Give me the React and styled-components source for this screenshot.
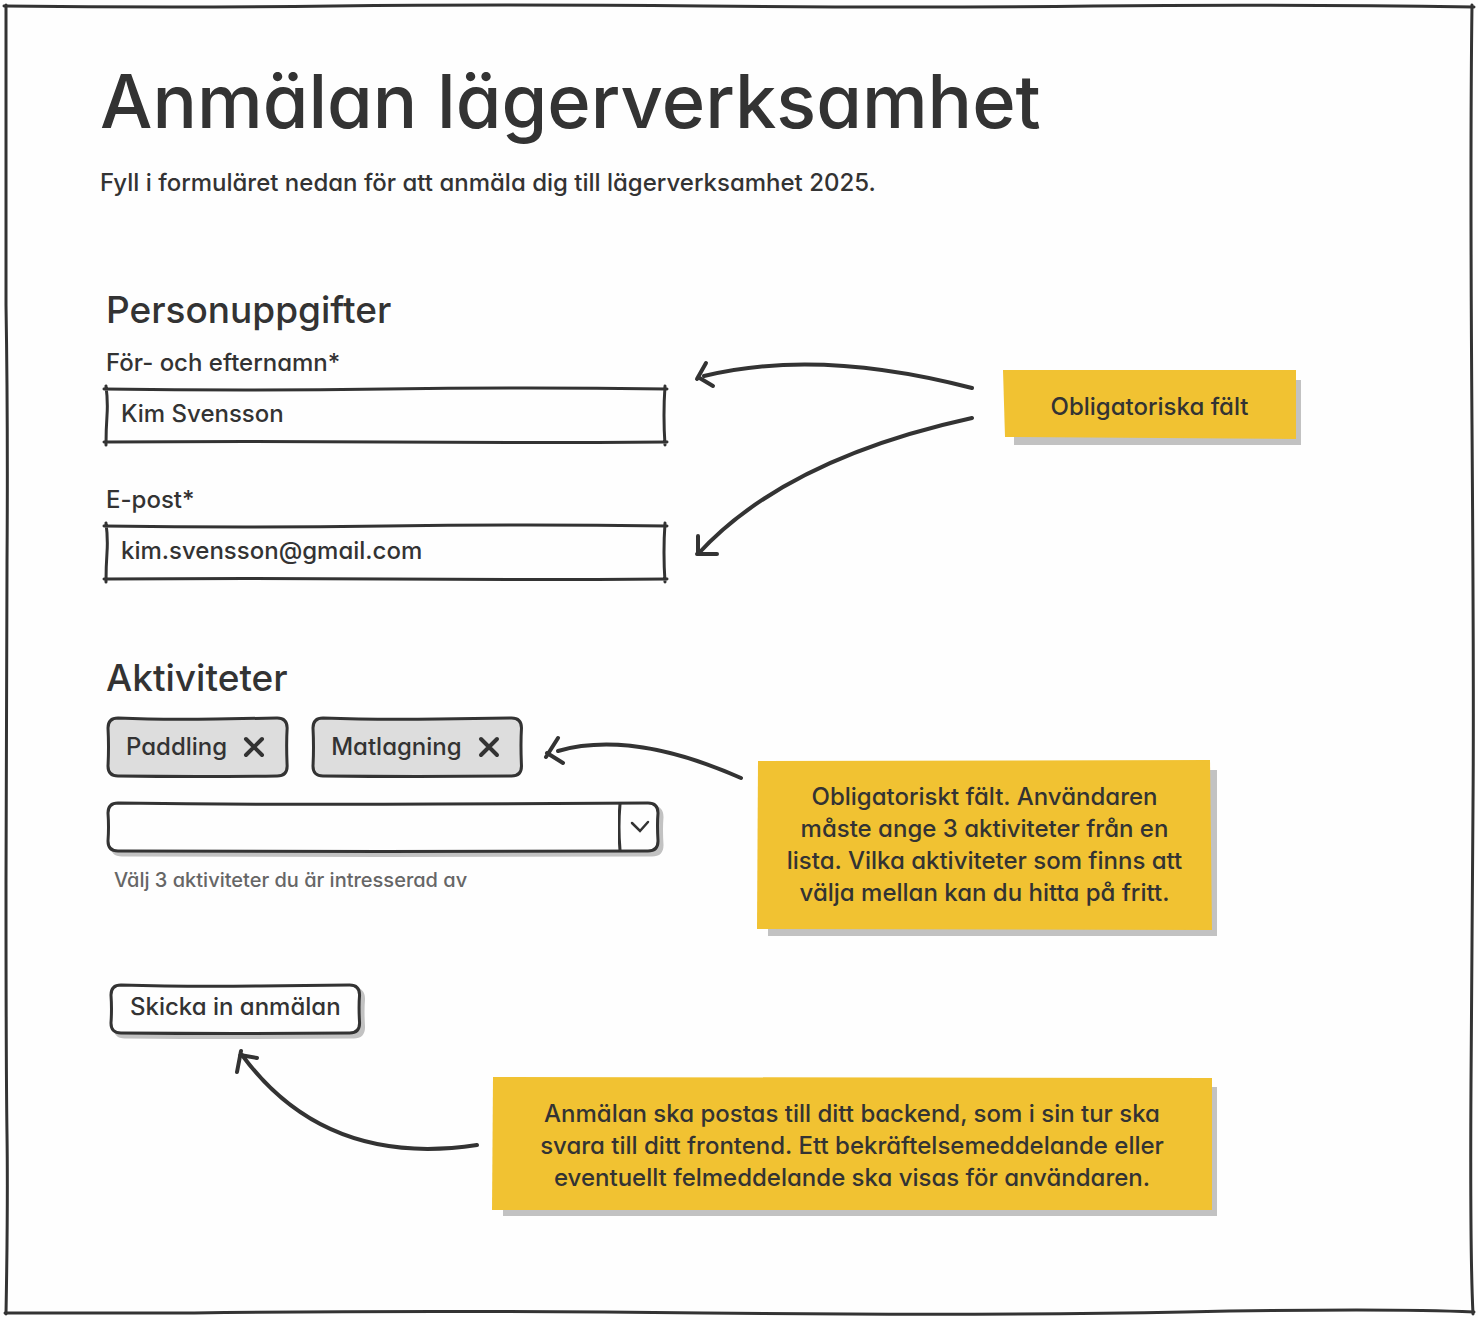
import React, { useState } from "react";
import styled, { createGlobalStyle } from "styled-components";

const ink = "#333333";
const shade = "#c2c2c2";
const yellow = "#f1c232";

const GlobalStyle = createGlobalStyle`
  *, *::before, *::after { box-sizing: border-box; }
  body {
    margin: 0;
    background: #fefefe;
    color: ${ink};
    font-family: Inter, "Open Sans", sans-serif;
    font-feature-settings: "cv11" 1;
    font-size: 24px;
    font-weight: 500;
    line-height: 32px;
  }
  input, select, button { font: inherit; font-feature-settings: inherit; color: inherit; }
  h1, h2, p { margin: 0; }
`;

/* Four hand-drawn strokes that cross slightly at the corners */
function crossedPath(w, h) {
  return [
    `M-2 2 Q${w * 0.25} 4 ${w * 0.5} 2 T${w + 1} 2`,
    `M0 -1 Q2 ${h * 0.25} 1 ${h * 0.5} T0 ${h + 1}`,
    `M-2 ${h - 2} Q${w * 0.25} ${h - 3} ${w * 0.5} ${h - 2} T${w + 1} ${h - 2}`,
    `M${w - 1} -1 Q${w - 3} ${h * 0.5} ${w - 1} ${h + 1}`,
  ].join(" ");
}

/* One closed wobbly stroke with rounded corners */
function roundedPath(w, h, r = 10) {
  const a = 2;
  const b = w - 2;
  const c = h - 2;
  return [
    `M${a + r} ${a}`,
    `Q${w * 0.3} ${a + 2} ${w * 0.6} ${a + 1}`,
    `T${b - r} ${a}`,
    `Q${b} ${a} ${b} ${a + r}`,
    `Q${b - 1} ${h * 0.45} ${b} ${c - r}`,
    `Q${b} ${c} ${b - r} ${c}`,
    `Q${w * 0.5} ${c + 1} ${a + r} ${c}`,
    `Q${a} ${c} ${a} ${c - r}`,
    `Q${a + 1} ${h * 0.5} ${a} ${a + r}`,
    `Q${a} ${a} ${a + r} ${a}Z`,
  ].join(" ");
}

const OutlineSvg = styled.svg`
  position: absolute;
  inset: 0;
  width: 100%;
  height: 100%;
  overflow: visible;
  pointer-events: none;
  z-index: -1;
  fill: ${(p) => p.$fill || "none"};
  stroke: ${ink};
  stroke-width: 3;
  stroke-linecap: round;
  stroke-linejoin: round;
`;

const ShadowPath = styled.path`
  fill: ${shade};
  stroke: ${shade};
`;

function Outline({ w, h, rounded, shadow, fill }) {
  const d = rounded ? roundedPath(w, h) : crossedPath(w, h);
  return (
    <OutlineSvg viewBox={`0 0 ${w} ${h}`} preserveAspectRatio="none" $fill={fill} aria-hidden="true">
      {shadow && <ShadowPath d={d} transform="translate(4 4)" />}
      <path d={d} vectorEffect="non-scaling-stroke" />
    </OutlineSvg>
  );
}

const Page = styled.div`
  padding: 5px 4px;
`;

const Frame = styled.main`
  position: relative;
  isolation: isolate;
  padding: 50px 96px 104px;
`;

const FrameLines = styled(OutlineSvg)``;

const Title = styled.h1`
  font-size: 74px;
  line-height: 92px;
  font-weight: 500;
`;

const Intro = styled.p`
  margin-top: 20px;
`;

const Form = styled.form`
  padding-left: 6px;
`;

const Section = styled.section`
  display: flex;
  align-items: flex-start;
  margin-top: ${(p) => p.$gap}px;
`;

const Column = styled.div`
  flex: 0 1 560px;
  min-width: 0;
`;

const Heading = styled.h2`
  font-size: 37px;
  line-height: 44px;
  font-weight: 500;
`;

const Field = styled.div`
  display: flex;
  flex-direction: column;
  gap: 8px;
  margin-top: ${(p) => p.$gap}px;
`;

const Box = styled.div`
  position: relative;
  isolation: isolate;
  height: ${(p) => p.$height}px;
`;

const TextInput = styled.input`
  display: block;
  width: 100%;
  height: 100%;
  padding: 0 15px 4px;
  border: 0;
  background: transparent;
`;

const Chips = styled.div`
  display: flex;
  align-items: center;
  gap: 22px;
  width: max-content;
  margin-top: 16px;
`;

const Chip = styled.div`
  position: relative;
  isolation: isolate;
  display: flex;
  align-items: center;
  gap: 16px;
  height: 62px;
  padding: 0 24px 0 20px;
`;

const RemoveButton = styled.button`
  display: flex;
  padding: 0;
  border: 0;
  background: transparent;
  cursor: pointer;
`;

const SelectBox = styled(Box)`
  margin-top: 23px;
  margin-right: 6px;
`;

const Select = styled.select`
  display: block;
  width: 100%;
  height: 100%;
  padding: 0 56px 0 15px;
  border: 0;
  appearance: none;
  background: transparent;
`;

const SelectMark = styled.svg`
  position: absolute;
  top: 0;
  right: 0;
  pointer-events: none;
`;

const Hint = styled.p`
  margin-top: 13px;
  padding-left: 8px;
  font-size: 20px;
  line-height: 28px;
  color: #666666;
`;

const Submit = styled.button`
  position: relative;
  isolation: isolate;
  height: 52px;
  margin: 53px 0 0 3px;
  padding: 0 21px 4px;
  border: 0;
  background: transparent;
  cursor: pointer;
`;

const Arrow = styled.svg`
  flex: none;
  overflow: visible;
  fill: none;
  stroke: ${ink};
  stroke-width: 4;
  stroke-linecap: round;
  stroke-linejoin: round;
`;

const FieldArrows = styled(Arrow)`
  margin: 69px 25px 0 26px;
`;

const ChipArrow = styled(Arrow)`
  margin-top: 20px;
`;

const SubmitRow = styled.div`
  display: flex;
  align-items: flex-start;
  gap: 14px;
  margin: 14px 0 0 128px;
`;

const Note = styled.aside`
  position: relative;
  isolation: isolate;
  flex: 0 1 ${(p) => p.$width}px;
  margin-top: ${(p) => p.$top}px;
  margin-left: ${(p) => p.$left || 0}px;
  padding: 21px 10px ${(p) => p.$bottom || 16}px;
  line-height: 32px;
  text-align: center;

  &::before,
  &::after {
    content: "";
    position: absolute;
    z-index: -1;
  }
  &::before {
    inset: 10px -5px -6px 11px;
    background: ${shade};
  }
  &::after {
    inset: 0;
    background: ${yellow};
    clip-path: polygon(${(p) => p.$shape});
  }
`;

const CHIP_SIZES = { Paddling: 183, Matlagning: 213 };
const OPTIONS = ["Paddling", "Matlagning", "Klättring", "Vandring", "Simning"];

export default function App() {
  const [chosen, setChosen] = useState(["Paddling", "Matlagning"]);
  const remove = (name) => setChosen(chosen.filter((c) => c !== name));
  const add = (e) => {
    const name = e.target.value;
    if (name && !chosen.includes(name) && chosen.length < 3) setChosen([...chosen, name]);
  };

  return (
    <Page>
      <GlobalStyle />
      <Frame>
        <FrameLines viewBox="0 0 1470 1310" preserveAspectRatio="none" aria-hidden="true">
          <path d="M0 1 Q170 3 330 1 T700 1 T1090 1 T1470 2" />
          <path d="M2 0 L2 300 Q4 420 3 560 T2 880 T3 1130 T2 1310" />
          <path d="M1 1309 L190 1309 Q420 1306 700 1309 T1180 1308 T1470 1308" />
          <path d="M1468 0 Q1466 150 1468 420 T1469 800 T1467 1080 T1469 1310" />
        </FrameLines>

        <Title>Anmälan lägerverksamhet</Title>
        <Intro>Fyll i formuläret nedan för att anmäla dig till lägerverksamhet 2025.</Intro>

        <Form onSubmit={(e) => e.preventDefault()}>
          <Section $gap={89}>
            <Column>
              <Heading>Personuppgifter</Heading>
              <Field $gap={15}>
                <label htmlFor="name">För- och efternamn*</label>
                <Box $height={57}>
                  <Outline w={560} h={57} />
                  <TextInput id="name" type="text" defaultValue="Kim Svensson" required />
                </Box>
              </Field>
              <Field $gap={40}>
                <label htmlFor="email">E-post*</label>
                <Box $height={57}>
                  <Outline w={560} h={57} />
                  <TextInput id="email" type="email" defaultValue="kim.svensson@gmail.com" required />
                </Box>
              </Field>
            </Column>
            <FieldArrows width="286" height="204" viewBox="0 0 286 204" aria-hidden="true">
              <path d="M12 19 Q126 -9 280 31" />
              <path d="M14 6 L5 22 M6 20 L21 29" />
              <path d="M280 61 Q93 102 6 197" />
              <path d="M6 179 V197 M5 197 H25" />
            </FieldArrows>
            <Note $width={293} $top={82} $shape="0 0, 100% 0, 100% 100%, 2px calc(100% - 2px)">
              Obligatoriska fält
            </Note>
          </Section>

          <Section $gap={75}>
            <Column>
              <Heading>Aktiviteter</Heading>
              <Chips>
                {chosen.map((name) => (
                  <Chip key={name}>
                    <Outline w={CHIP_SIZES[name] || 190} h={62} rounded fill="#dddddd" />
                    {name}
                    <RemoveButton type="button" aria-label={`Ta bort ${name}`} onClick={() => remove(name)}>
                      <svg width="22" height="22" viewBox="0 0 22 22" stroke={ink} strokeWidth="4" strokeLinecap="round" aria-hidden="true">
                        <path d="M3 3 L19 19 M19 3 L3 19" />
                      </svg>
                    </RemoveButton>
                  </Chip>
                ))}
                <ChipArrow width="200" height="40" viewBox="3 0 200 40" aria-hidden="true">
                  <path d="M15 14 Q89 -7 198 41" />
                  <path d="M15 1 L3 20 M4 16 L20 26" />
                </ChipArrow>
              </Chips>
              <SelectBox $height={52}>
                <Outline w={554} h={52} rounded shadow fill="#fefefe" />
                <Select aria-label="Aktiviteter" aria-describedby="hint" value="" onChange={add}>
                  <option value="" />
                  {OPTIONS.map((o) => (
                    <option key={o}>{o}</option>
                  ))}
                </Select>
                <SelectMark width="42" height="52" viewBox="0 0 42 52" fill="none" stroke={ink} strokeWidth="3" strokeLinecap="round" aria-hidden="true">
                  <path d="M2 3 Q0 26 2 49" />
                  <path d="M14 22 L22 30 L30 21" strokeWidth="2.5" />
                </SelectMark>
              </SelectBox>
              <Hint id="hint">Välj 3 aktiviteter du är intresserad av</Hint>
            </Column>
            <Note $width={455} $top={104} $left={91} $bottom={21} $shape="1px 1px, calc(100% - 2px) 0, 100% 100%, 0 calc(100% - 1px)">
              Obligatoriskt fält. Användaren
              <br />
              måste ange 3 aktiviteter från en
              <br />
              lista. Vilka aktiviteter som finns att
              <br />
              välja mellan kan du hitta på fritt.
            </Note>
          </Section>

          <Submit type="submit">
            <Outline w={254} h={52} rounded shadow fill="#fefefe" />
            Skicka in anmälan
          </Submit>
          <SubmitRow>
            <Arrow width="244" height="102" viewBox="0 0 244 102" aria-hidden="true">
              <path d="M8 6 Q91 119 243 96" />
              <path d="M7 2 L3 23 M6 6 L23 9" />
            </Arrow>
            <Note $width={720} $top={28} $shape="1px 0, 100% 1px, 100% 100%, 0 100%">
              Anmälan ska postas till ditt backend, som i sin tur ska
              <br />
              svara till ditt frontend. Ett bekräftelsemeddelande eller
              <br />
              eventuellt felmeddelande ska visas för användaren.
            </Note>
          </SubmitRow>
        </Form>
      </Frame>
    </Page>
  );
}
